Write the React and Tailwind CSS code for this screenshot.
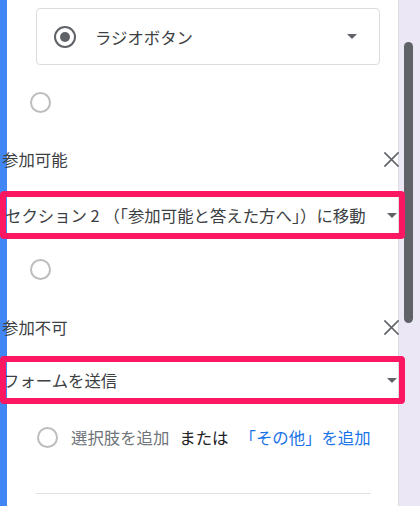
import React from "react";

function Caret() {
  return (
    <svg width="10" height="5" viewBox="0 0 10 5" className="shrink-0">
      <polygon points="0,0 10,0 5,5" fill="#5f6368" />
    </svg>
  );
}

function CloseX() {
  return (
    <svg width="15" height="15" viewBox="0 0 15 15" className="shrink-0">
      <path d="M1 1 L14 14 M14 1 L1 14" stroke="#5f6368" strokeWidth="1.7" strokeLinecap="square" />
    </svg>
  );
}

function EmptyRadio({ className = "" }) {
  return <div className={"w-[21px] h-[21px] rounded-full border-2 border-[#bdbdbd] shrink-0 " + className} />;
}

export default function App() {
  return (
    <div className="w-[420px] h-[506px] overflow-hidden flex font-['Noto_Sans_CJK_JP',sans-serif] text-[16.4px]">
      <div className="w-[399px] h-full bg-white border-l-[7px] border-l-[#4285f4] border-r border-r-[#dadce0] flex flex-col pt-[8px]">
        {/* Question type dropdown */}
        <div className="ml-[29px] w-[344px] h-[57px] shrink-0 border border-[#dadce0] rounded-[4px] flex items-center pl-[17px] pr-[22px]">
          <div className="w-[22px] h-[22px] rounded-full border-2 border-[#5f6368] flex items-center justify-center shrink-0">
            <div className="w-[10px] h-[10px] rounded-full bg-[#5f6368]" />
          </div>
          <span className="ml-[19px] text-[#3c4043] flex-1 leading-[24px]">ラジオボタン</span>
          <Caret />
        </div>

        {/* Option 1 */}
        <EmptyRadio className="ml-[23px] mt-[27px]" />
        <div className="relative z-10 ml-[-5px] w-[397px] h-[24px] mt-[34px] flex items-center justify-between shrink-0">
          <span className="text-[#3c4043] leading-[24px]">参加可能</span>
          <CloseX />
        </div>
        <div className="relative z-10 ml-[-7px] w-[405px] h-[48px] mt-[20px] shrink-0 border-[6px] border-[#fc1762] rounded-[4px] overflow-hidden flex items-center justify-between pr-[2px]">
          <span className="ml-[-1px] text-[#3c4043] leading-[24px] whitespace-nowrap">セクション 2 （「参加可能と答えた方へ」）に移動</span>
          <Caret />
        </div>

        {/* Option 2 */}
        <EmptyRadio className="ml-[23px] mt-[20px]" />
        <div className="relative z-10 ml-[-5px] w-[397px] h-[24px] mt-[35px] flex items-center justify-between shrink-0">
          <span className="text-[#3c4043] leading-[24px]">参加不可</span>
          <CloseX />
        </div>
        <div className="relative z-10 ml-[-7px] w-[405px] h-[48px] mt-[17px] shrink-0 border-[6px] border-[#fc1762] rounded-[4px] overflow-hidden flex items-center justify-between pr-[2px]">
          <span className="ml-[-3px] text-[#3c4043] leading-[24px] whitespace-nowrap">フォームを送信</span>
          <Caret />
        </div>

        {/* Add option row */}
        <div className="ml-[30px] h-[24px] mt-[21px] flex items-center shrink-0 whitespace-nowrap">
          <EmptyRadio />
          <span className="ml-[13px] text-[#70757a] leading-[24px]">選択肢を追加</span>
          <span className="ml-[10px] text-[#202124] leading-[24px]">または</span>
          <span className="ml-[11px] text-[#1a73e8] leading-[24px]">「その他」を追加</span>
        </div>

        <div className="ml-[29px] w-[335px] h-px bg-[#e0e0e0] mt-[44px] shrink-0" />
      </div>

      {/* Scroll gutter */}
      <div className="w-[21px] h-full bg-[#ebe7f4] pt-[42px] pl-[5px]">
        <div className="w-[9px] h-[281px] rounded-full bg-[#5f6368]" />
      </div>
    </div>
  );
}
